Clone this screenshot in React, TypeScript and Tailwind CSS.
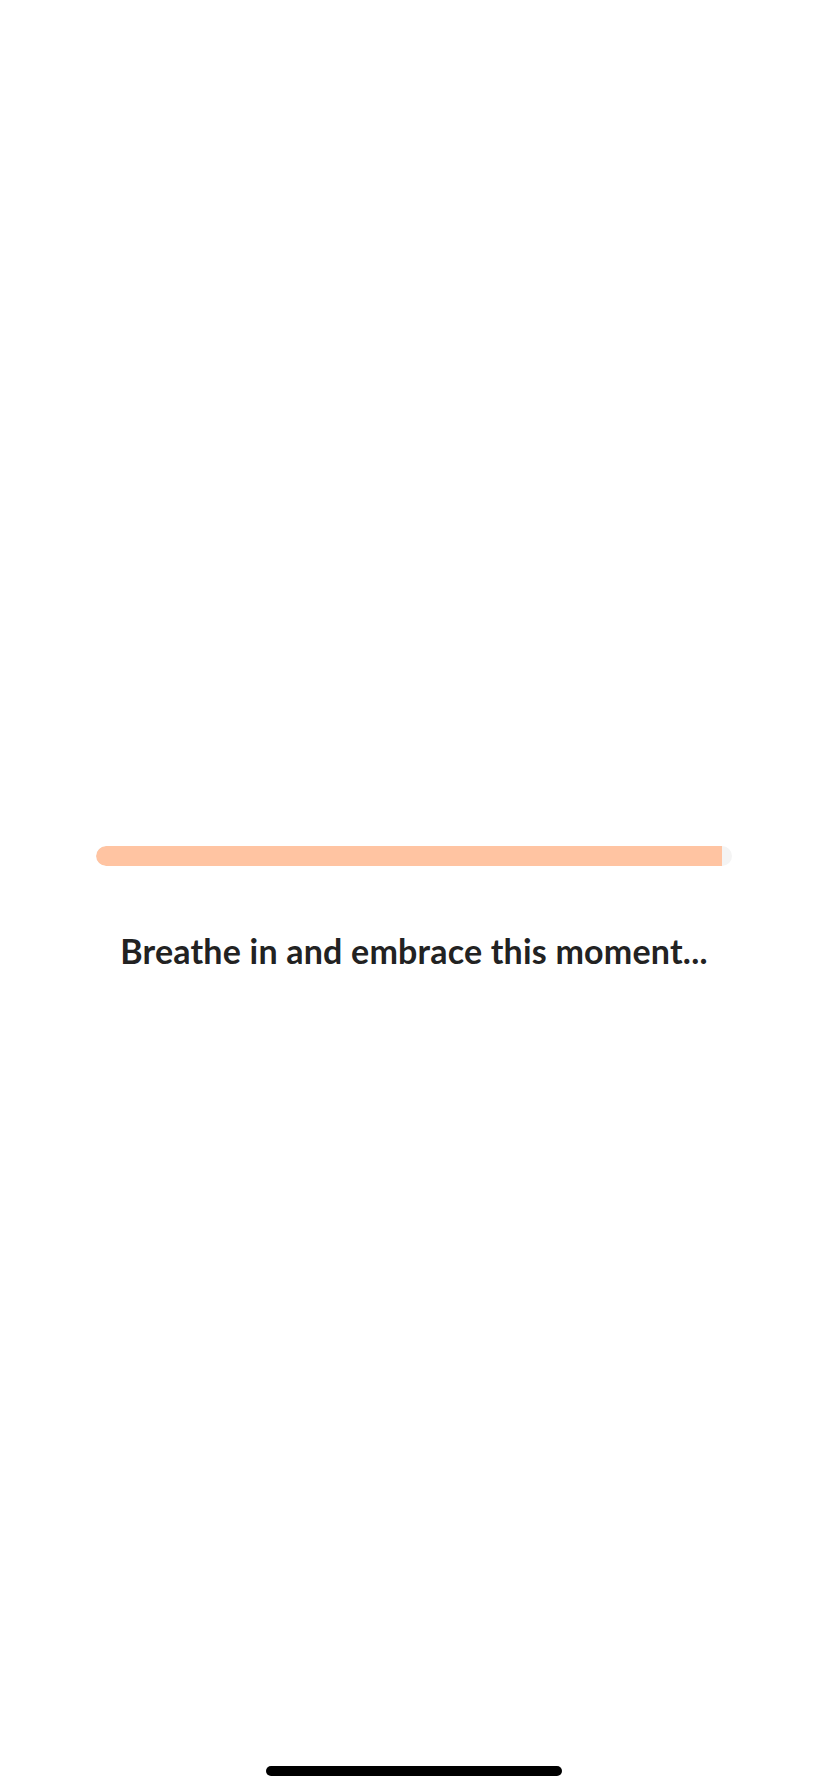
// App.tsx
import React from "react";

const progress = 0.984;

const App: React.FC = () => {
    return (
        <div
            className="w-[828px] h-[1792px] bg-white flex flex-col items-center overflow-hidden"
            style={{ fontFamily: "Lato, 'Noto Sans', sans-serif" }}
        >
            {/* Progress bar */}
            <div className="mt-[846px] w-[636px] h-[20px] rounded-full bg-[#f4f4f4] overflow-hidden">
                <div
                    className="h-full bg-[#ffc4a2] rounded-l-full"
                    style={{ width: `${progress * 100}%` }}
                />
            </div>

            {/* Message */}
            <p className="mt-[63px] text-[34px] leading-[44px] font-bold text-[#222222] text-center tracking-[0.2px]">
                Breathe in and embrace this moment...
            </p>

            <div className="flex-1" />

            {/* Home indicator */}
            <div className="mb-[16px] w-[296px] h-[10px] rounded-full bg-black" />
        </div>
    );
};

export default App;
